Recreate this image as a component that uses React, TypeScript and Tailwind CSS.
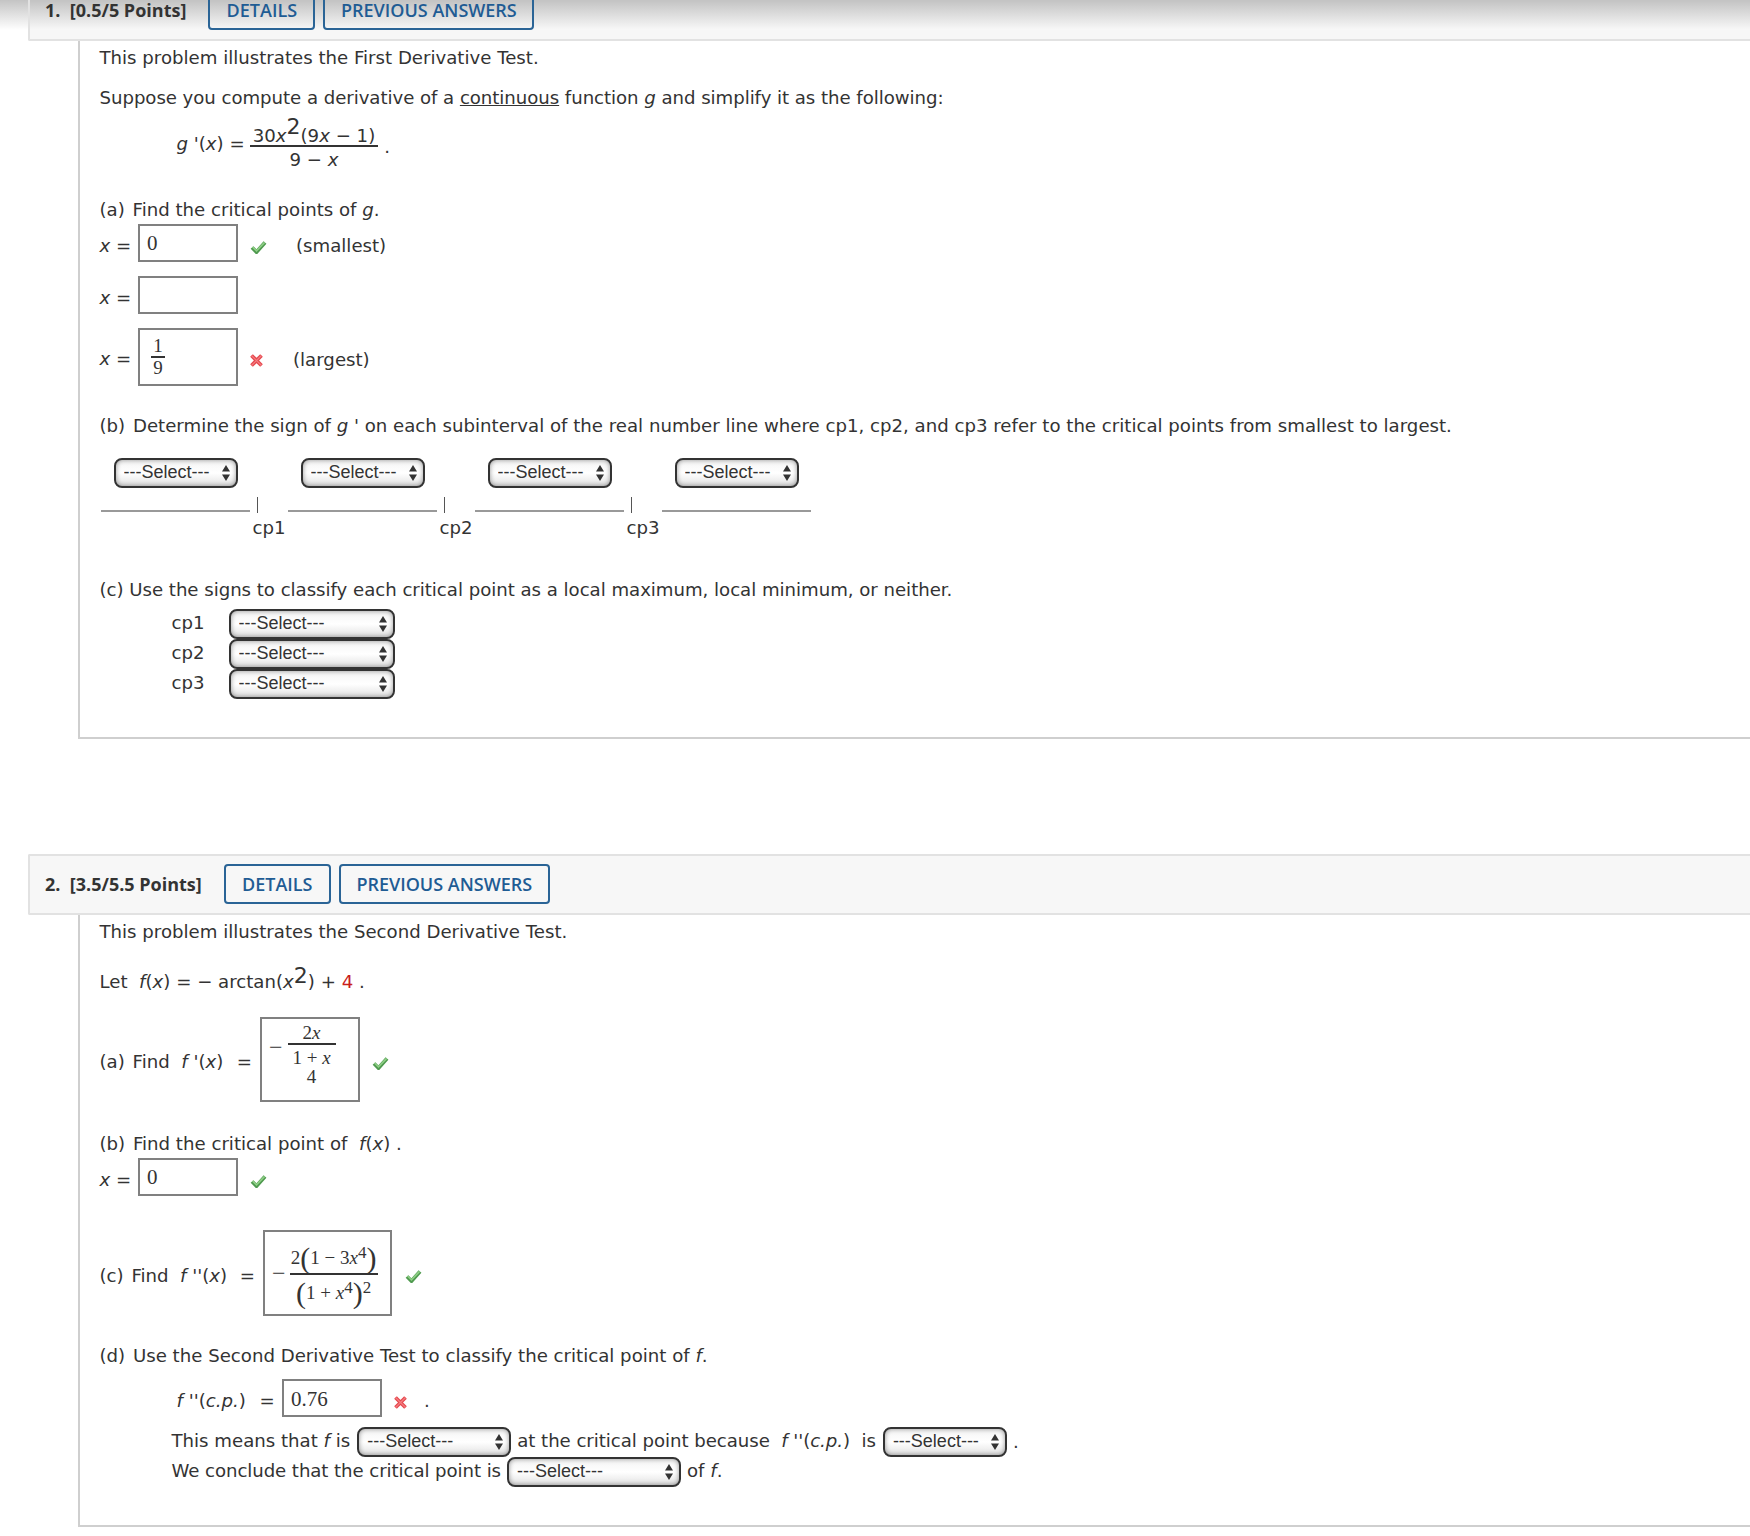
import React from "react";

function Check() {
  return (
    <svg width="17" height="14" viewBox="0 0 17 14" className="shrink-0">
      <path d="M2 7.5 L6.5 12 L15 2.5" fill="none" stroke="#4f9a4f" strokeWidth="3.8" />
      <path d="M2.5 7 L6.5 10.8 L14.6 2.4" fill="none" stroke="#8fcf86" strokeWidth="1.6" />
    </svg>
  );
}

function Cross() {
  return (
    <svg width="15" height="15" viewBox="0 0 15 15" className="shrink-0">
      <path d="M2.5 2.5 L12.5 12.5 M12.5 2.5 L2.5 12.5" fill="none" stroke="#e5484e" strokeWidth="3.8" />
      <path d="M2.5 2.5 L12.5 12.5 M12.5 2.5 L2.5 12.5" fill="none" stroke="#f57d80" strokeWidth="1.2" />
    </svg>
  );
}

function I({ children }: { children: React.ReactNode }) {
  return <span className="italic">{children}</span>;
}

function Select({ width }: { width: string }) {
  return (
    <div className={`relative h-[30px] shrink-0 ${width}`}>
      <select className="h-full w-full appearance-none rounded-[8px] border-2 border-[#333] bg-linear-to-b from-[#f4f4f4] via-white to-[#e2e2e2] pb-[2px] pl-2 font-['Liberation_Sans'] text-[18px] text-[#333] shadow-[inset_0_0_5px_rgba(0,0,0,0.4)]">
        <option>---Select---</option>
      </select>
      <svg width="8" height="16" viewBox="0 0 8 16" className="absolute right-[8px] top-[7px]">
        <path d="M4 0 L8 6.5 H0 Z M4 16 L8 9.5 H0 Z" fill="#333" />
      </svg>
    </div>
  );
}

function Input({ children, className }: { children?: React.ReactNode; className: string }) {
  return (
    <div className={`flex shrink-0 items-center border-2 border-[#808080] bg-white font-['Liberation_Serif'] text-[#333] ${className}`}>
      {children}
    </div>
  );
}

function Header({ label, className }: { label: string; className: string }) {
  return (
    <div className={`relative ml-[28px] flex h-[61px] items-center rounded-l-[2px] border-y-[2px] border-l-[2px] border-[#e2e2e2] pb-[2px] pl-[15px] font-['Open_Sans'] text-[18px] leading-none ${className}`}>
      <span className="mr-[22px] whitespace-pre font-bold text-[#333]">{label}</span>
      <div className="flex gap-[8px] font-semibold text-[#1f5c94]">
        <span className="flex h-[40px] w-[107px] items-center justify-center rounded-[4px] border-2 border-[#2a6496]">DETAILS</span>
        <span className="flex h-[40px] w-[211px] items-center justify-center rounded-[4px] border-2 border-[#2a6496]">PREVIOUS ANSWERS</span>
      </div>
    </div>
  );
}

function SignCell({ cp }: { cp: string }) {
  return (
    <div className="w-[187px] shrink-0">
      <div className="flex h-[16px] items-end">
        <div className="mb-[1px] ml-[1px] h-[2px] w-[149px] bg-[#999]" />
        <div className="ml-[7px] h-[16px] w-[1.5px] bg-[#555]" />
      </div>
      <div className="ml-[153px] mt-[3px] h-[24px] leading-[24px]">{cp}</div>
    </div>
  );
}

function ClassifyRow({ cp }: { cp: string }) {
  return (
    <div className="flex h-[30px] items-center pl-[72px]">
      <span className="w-[57px] pb-[2px]">{cp}</span>
      <Select width="w-[166px]" />
    </div>
  );
}

export default function App() {
  return (
    <div className="relative h-[1536px] w-[1750px] overflow-hidden bg-white font-['DejaVu_Sans'] text-[18.15px] leading-[24px] text-[#333]">
      <div className="absolute inset-x-0 top-0 h-[30px] bg-linear-to-b from-[#c4c4c4] to-transparent" />

      {/* question 1 */}
      <div className="-mt-[20px]">
        <Header
          label={"1.\u00a0\u00a0[0.5/5 Points]"}
          className="bg-[linear-gradient(to_bottom,#c4c4c4_33%,#f7f7f7_83%)]"
        />
      </div>
      <div className="ml-[78px] h-[698px] border-b-[2px] border-l-[2px] border-[#cfcfcf] pl-[19.5px]">
        <p className="pt-[5px]">This problem illustrates the First Derivative Test.</p>
        <p className="mt-[16px] tracking-[-0.05px]">
          Suppose you compute a derivative of a <span className="underline">continuous</span> function <I>g</I> and simplify it as the following:
        </p>
        <div className="mt-[12px] flex h-[50px] items-center pl-[77px]">
          <span className="pb-[7px]"><I>g</I> '(<I>x</I>) =</span>
          <div className="ml-[5px] flex flex-col items-center">
            <span className="flex h-[25px] items-end whitespace-pre border-b-[2px] border-[#333] px-[3px] leading-[18px]">
              30<I>x</I><span className="mb-[7px] text-[22px] leading-none">2</span>(9<I>x</I> − 1)
            </span>
            <span className="h-[25px] pt-[1px]">9 − <I>x</I></span>
          </div>
          <span className="ml-[6px]">.</span>
        </div>

        <p className="mt-[26px]"><span className="mr-[2px]">(a)</span> Find the critical points of <I>g</I>.</p>
        <div className="mt-[2px] flex h-[38px] items-center">
          <span className="w-[38.5px] pt-[6px]"><I>x</I> =</span>
          <Input className="h-[38px] w-[100px] pl-[7px] text-[21px]">0</Input>
          <span className="ml-[12px] mt-[7px]"><Check /></span>
          <span className="ml-[29px] pt-[6px]">(smallest)</span>
        </div>
        <div className="mt-[14px] flex h-[38px] items-center">
          <span className="w-[38.5px] pt-[6px]"><I>x</I> =</span>
          <Input className="h-[38px] w-[100px]" />
        </div>
        <div className="mt-[14px] flex h-[58px] items-center">
          <span className="w-[38.5px] pt-[4px]"><I>x</I> =</span>
          <Input className="h-[58px] w-[100px] pl-[11px] text-[19px] leading-[20px]">
            <div className="flex flex-col items-center">
              <span className="w-[14px] border-b-[2px] border-[#333] text-center">1</span>
              <span>9</span>
            </div>
          </Input>
          <span className="ml-[11px] mt-[7px]"><Cross /></span>
          <span className="ml-[29px] pt-[5px]">(largest)</span>
        </div>

        <p className="mt-[28px]">
          <span className="mr-[2px]">(b)</span> Determine the sign of <I>g</I> ' on each subinterval of the real number line where cp1, cp2, and cp3 refer to the critical points from smallest to largest.
        </p>
        <div className="mt-[20px] flex pl-[14px]">
          {[0, 1, 2, 3].map((i) => (
            <div key={i} className="w-[187px] shrink-0">
              <Select width="w-[124px]" />
            </div>
          ))}
        </div>
        <div className="mt-[9px] flex">
          <SignCell cp="cp1" />
          <SignCell cp="cp2" />
          <SignCell cp="cp3" />
          <div className="ml-[1px] mt-[13px] h-[2px] w-[149px] bg-[#999]" />
        </div>

        <p className="mt-[38px] tracking-[-0.03px]">(c) Use the signs to classify each critical point as a local maximum, local minimum, or neither.</p>
        <div className="mt-[7px]">
          <ClassifyRow cp="cp1" />
          <ClassifyRow cp="cp2" />
          <ClassifyRow cp="cp3" />
        </div>
      </div>

      {/* question 2 */}
      <div className="mt-[115px]">
        <Header label={"2.\u00a0\u00a0[3.5/5.5 Points]"} className="bg-[#f7f7f7]" />
      </div>
      <div className="ml-[78px] h-[612px] border-b-[2px] border-l-[2px] border-[#cfcfcf] pl-[19.5px]">
        <p className="pt-[5px]">This problem illustrates the Second Derivative Test.</p>
        <p className="mt-[26px] flex h-[24px] items-end whitespace-pre">
          <span>Let{"\u00a0 "}<I>f</I>(<I>x</I>) = − arctan(<I>x</I></span>
          <span className="mb-[7px] text-[22px] leading-none">2</span>
          <span>) + <span className="text-[#c9201c]">4</span> .</span>
        </p>
        <div className="mt-[23px] flex h-[85px] items-center">
          <span className="w-[160.5px] whitespace-nowrap pt-[5px]">
            <span className="mr-[2px]">(a)</span> Find&nbsp; <I>f</I> '(<I>x</I>)&nbsp; <span className="ml-[2px]">=</span>
          </span>
          <Input className="h-[85px] w-[100px] pb-[10px] pl-[7px] text-[19px] leading-[19px]">
            <span className="mb-[14px] mr-[5px] text-[24px]">−</span>
            <div className="flex flex-col items-center">
              <span className="w-[48px] border-b-[2px] border-[#333] pb-[1px] text-center italic">
                <span className="not-italic">2</span>x
              </span>
              <span className="whitespace-pre pt-[3px]">1 + <I>x</I></span>
              <span>4</span>
            </div>
          </Input>
          <span className="ml-[12px] mt-[6px]"><Check /></span>
        </div>

        <p className="mt-[30px]"><span className="mr-[2px]">(b)</span> Find the critical point of&nbsp; <I>f</I>(<I>x</I>) .</p>
        <div className="mt-[2px] flex h-[38px] items-center">
          <span className="w-[38.5px] pt-[5px]"><I>x</I> =</span>
          <Input className="h-[38px] w-[100px] pl-[7px] text-[21px]">0</Input>
          <span className="ml-[12px] mt-[7px]"><Check /></span>
        </div>

        <div className="mt-[34px] flex h-[86px] items-center">
          <span className="w-[163.5px] whitespace-nowrap pt-[5px]">
            <span className="mr-[2px]">(c)</span> Find&nbsp; <I>f</I> ''(<I>x</I>)&nbsp; <span className="ml-[1px]">=</span>
          </span>
          <Input className="h-[86px] w-[129px] pl-[7px] text-[19px] leading-[20px]">
            <span className="mr-[4px] text-[24px]">−</span>
            <div className="flex flex-col items-center">
              <span className="flex h-[39px] w-[88px] items-center justify-center whitespace-pre border-b-[2px] border-[#333] pt-[8px]">
                2<span className="text-[30px] font-light">(</span>1 − 3<I>x</I>
                <span className="mb-[10px] text-[17px]">4</span>
                <span className="text-[30px] font-light">)</span>
              </span>
              <span className="flex h-[36px] items-center whitespace-pre">
                <span className="text-[30px] font-light">(</span>1 + <I>x</I>
                <span className="mb-[10px] text-[17px]">4</span>
                <span className="text-[30px] font-light">)</span>
                <span className="mb-[10px] text-[17px]">2</span>
              </span>
            </div>
          </Input>
          <span className="ml-[13px] mt-[6px]"><Check /></span>
        </div>

        <p className="mt-[28px]"><span className="mr-[2px]">(d)</span> Use the Second Derivative Test to classify the critical point of <I>f</I>.</p>
        <div className="mt-[11px] flex h-[38px] items-center pl-[77px]">
          <span className="w-[105.5px] whitespace-nowrap pt-[6px]">
            <I>f</I> ''(<I>c.p.</I>)&nbsp; <span className="ml-[2px]">=</span>
          </span>
          <Input className="h-[38px] w-[100px] pl-[7px] pt-[1px] text-[21px]">0.76</Input>
          <span className="ml-[11px] mt-[8px]"><Cross /></span>
          <span className="ml-[16px] mt-[6px]">.</span>
        </div>
        <div className="mt-[10px] flex h-[30px] items-center pl-[72px]">
          <span className="pb-[2px]">This means that <I>f</I> is</span>
          <span className="ml-[7px]"><Select width="w-[154px]" /></span>
          <span className="ml-[6px] pb-[2px] tracking-[-0.05px]">at the critical point because&nbsp; <I>f</I> ''(<I>c.p.</I>)&nbsp; is</span>
          <span className="ml-[7px]"><Select width="w-[124px]" /></span>
          <span className="ml-[6px]">.</span>
        </div>
        <div className="flex h-[30px] items-center pl-[72px]">
          <span className="pb-[2px] tracking-[-0.08px]">We conclude that the critical point is</span>
          <span className="ml-[6px]"><Select width="w-[174px]" /></span>
          <span className="ml-[6px] pb-[2px]">of <I>f</I>.</span>
        </div>
      </div>
    </div>
  );
}
